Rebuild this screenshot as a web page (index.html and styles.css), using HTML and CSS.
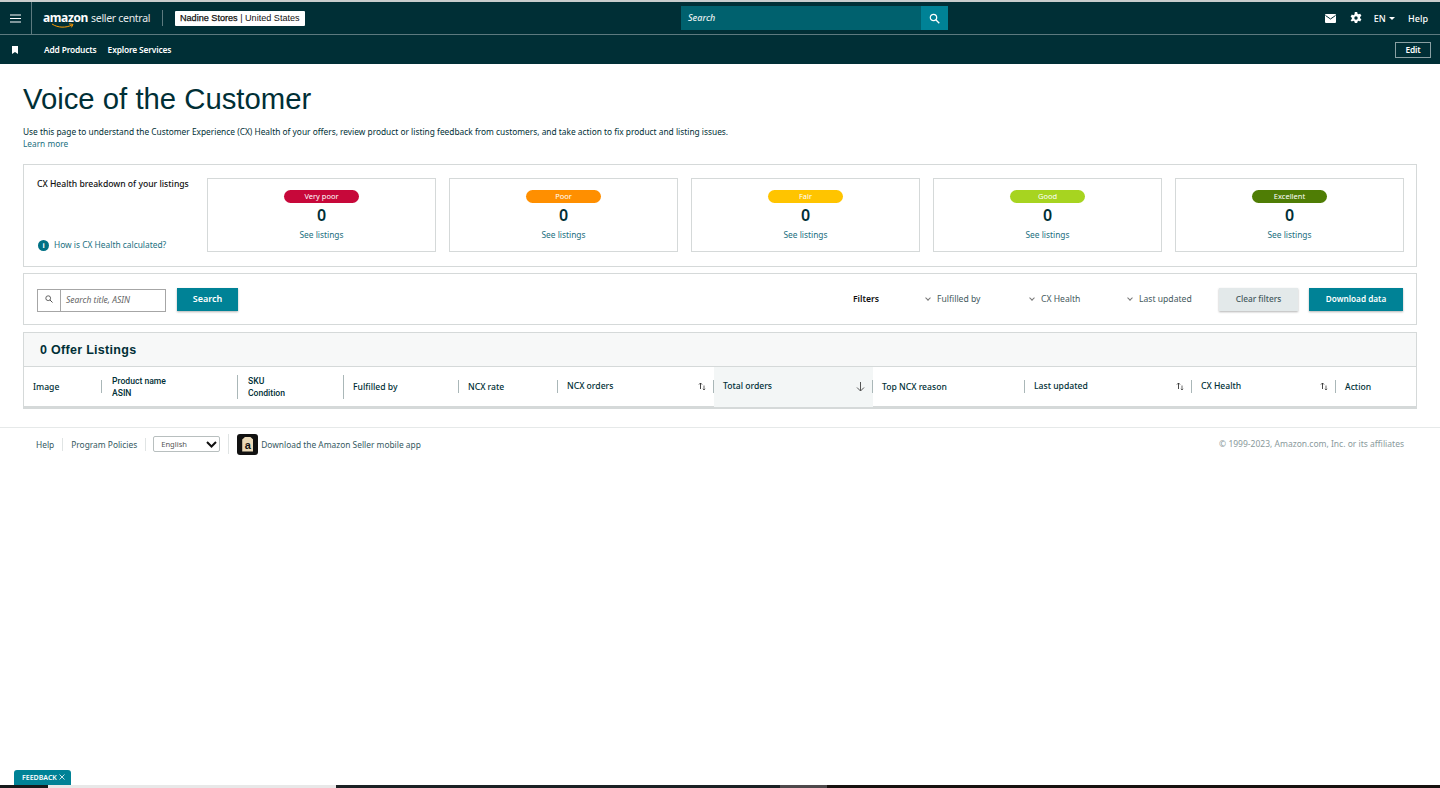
FILE: index.html
```html
<!DOCTYPE html>
<html lang="en">
<head>
    <meta charset="UTF-8">
    <title>Voice of the Customer</title>
    <link rel="stylesheet" href="styles.css">
</head>
<body>
    <header class="topbar">
        <div class="menu-btn">
            <svg width="11" height="9" viewBox="0 0 11 9"><path d="M0 1h11M0 4.500h11M0 8h11" stroke="#fff" stroke-width="1.200"/></svg>
        </div>
        <div class="logo">
            <span class="logo-amazon">amazon</span>
            <span class="logo-seller">seller central</span>
            <svg class="logo-smile" width="24" height="6" viewBox="0 0 24 6"><path d="M1 1c6 4 14 4 20 1M18 .8l4 .6-1.600 3" fill="none" stroke="#f90" stroke-width="1"/></svg>
        </div>
        <div class="store-pick"><b>Nadine Stores</b> | United States</div>
        <div class="top-search">
            <div class="top-search-input">Search</div>
            <div class="top-search-btn">
                <svg width="11" height="11" viewBox="0 0 11 11"><circle cx="4.500" cy="4.500" r="3.200" fill="none" stroke="#fff" stroke-width="1.200"/><path d="M7 7l3.300 3.300" stroke="#fff" stroke-width="1.300"/></svg>
            </div>
        </div>
        <div class="top-right">
            <svg width="11" height="9" viewBox="0 0 11 9"><rect width="11" height="9" rx="1" fill="#fff"/><path d="M0.500 1.500l5 3.500 5-3.500" fill="none" stroke="#002f36" stroke-width="1"/></svg>
            <svg class="gear" width="12" height="12" viewBox="0 0 12 12"><path d="M4.800 0h2.400l.3 1.700 1.100.6 1.600-.6 1.200 2.100-1.300 1.100v1.300l1.300 1.100-1.200 2.100-1.600-.6-1.100.6-.3 1.700H4.800l-.3-1.700-1.100-.6-1.600.6L.6 8.200l1.300-1.100V5.800L.6 4.700 1.800 2.600l1.600.6 1.100-.6z" fill="#fff"/><circle cx="6" cy="6" r="1.700" fill="#002f36"/></svg>
            <span class="lang">EN <i class="caret"></i></span>
            <span>Help</span>
        </div>
    </header>
    <nav class="subbar">
        <svg class="bookmark" width="6" height="8" viewBox="0 0 6 8"><path d="M0 0h6v8L3 6 0 8z" fill="#fff"/></svg>
        <a>Add Products</a>
        <a>Explore Services</a>
        <div class="edit-btn">Edit</div>
    </nav>

    <main class="page">
        <h1>Voice of the Customer</h1>
        <p class="intro">Use this page to understand the Customer Experience (CX) Health of your offers, review product or listing feedback from customers, and take action to fix product and listing issues.</p>
        <a class="link learn">Learn more</a>

        <section class="box health">
            <div class="health-side">
                <div class="health-title">CX Health breakdown of your listings</div>
                <div class="health-how">
                    <span class="info">i</span>
                    <a class="link">How is CX Health calculated?</a>
                </div>
            </div>
            <div class="health-card">
                <span class="pill very-poor">Very poor</span>
                <b>0</b>
                <a class="link">See listings</a>
            </div>
            <div class="health-card">
                <span class="pill poor">Poor</span>
                <b>0</b>
                <a class="link">See listings</a>
            </div>
            <div class="health-card">
                <span class="pill fair">Fair</span>
                <b>0</b>
                <a class="link">See listings</a>
            </div>
            <div class="health-card">
                <span class="pill good">Good</span>
                <b>0</b>
                <a class="link">See listings</a>
            </div>
            <div class="health-card">
                <span class="pill excellent">Excellent</span>
                <b>0</b>
                <a class="link">See listings</a>
            </div>
        </section>

        <section class="box toolbar">
            <div class="search-field">
                <span class="search-icon">
                    <svg width="8" height="8" viewBox="0 0 8 8"><circle cx="3.200" cy="3.200" r="2.400" fill="none" stroke="#555" stroke-width=".9"/><path d="M5 5l2.500 2.500" stroke="#555" stroke-width="1"/></svg>
                </span>
                <span class="search-text">Search title, ASIN</span>
            </div>
            <div class="btn primary search-btn">Search</div>
            <div class="filters-label">Filters</div>
            <div class="filter f1"><i class="chev"></i>Fulfilled by</div>
            <div class="filter f2"><i class="chev"></i>CX Health</div>
            <div class="filter f3"><i class="chev"></i>Last updated</div>
            <div class="btn clear">Clear filters</div>
            <div class="btn primary download">Download data</div>
        </section>

        <section class="box listings">
            <div class="listings-head">0 Offer Listings</div>
            <div class="cols">
                <div class="col c-image"><span>Image</span></div>
                <div class="col c-name"><span class="roboto">Product name<br>ASIN</span></div>
                <div class="col c-sku"><span class="roboto">SKU<br>Condition</span></div>
                <div class="col c-ful"><span>Fulfilled by</span></div>
                <div class="col c-rate"><span>NCX rate</span></div>
                <div class="col c-ncx"><span class="raised">NCX orders</span>
                    <svg class="sort" width="8" height="9" viewBox="0 0 8 9"><path d="M2.500 7V1M1 2.500L2.500 1 4 2.500" fill="none" stroke="#333" stroke-width=".9"/><path d="M6 3.500V8M4.800 6.800L6 8l1.200-1.200" fill="none" stroke="#555" stroke-width=".9"/></svg>
                </div>
                <div class="col c-total"><span class="raised">Total orders</span><svg class="sort-down" width="9" height="10" viewBox="0 0 9 10"><path d="M4.500 0v9M1 5.500l3.500 3.500L8 5.500" fill="none" stroke="#555" stroke-width="1"/></svg></div>
                <div class="col c-top"><span>Top NCX reason</span></div>
                <div class="col c-upd"><span class="raised">Last updated</span>
                    <svg class="sort" width="8" height="9" viewBox="0 0 8 9"><path d="M2.500 7V1M1 2.500L2.500 1 4 2.500" fill="none" stroke="#333" stroke-width=".9"/><path d="M6 3.500V8M4.800 6.800L6 8l1.200-1.200" fill="none" stroke="#555" stroke-width=".9"/></svg>
                </div>
                <div class="col c-cx"><span class="raised">CX Health</span>
                    <svg class="sort" width="8" height="9" viewBox="0 0 8 9"><path d="M2.500 7V1M1 2.500L2.500 1 4 2.500" fill="none" stroke="#333" stroke-width=".9"/><path d="M6 3.500V8M4.800 6.800L6 8l1.200-1.200" fill="none" stroke="#555" stroke-width=".9"/></svg>
                </div>
                <div class="col c-act"><span>Action</span></div>
            </div>
        </section>
    </main>

    <footer class="foot">
        <a class="foot-link first">Help</a>
        <a class="foot-link policies">Program Policies</a>
        <div class="foot-select">English
            <svg width="11" height="7" viewBox="0 0 11 7"><path d="M1 1l4.500 4.500L10 1" fill="none" stroke="#111" stroke-width="2"/></svg>
        </div>
        <div class="foot-app">
            <span class="app-icon">a</span>
            <a class="foot-link plain">Download the Amazon Seller mobile app</a>
        </div>
        <div class="copyright">© 1999-2023, Amazon.com, Inc. or its affiliates</div>
    </footer>

    <div class="feedback">FEEDBACK
        <svg width="6" height="6" viewBox="0 0 6 6"><path d="M.5.500l5 5M5.500.500l-5 5" stroke="#fff" stroke-width=".8"/></svg>
    </div>
    <div class="taskbar">
        <div class="tb-a"></div>
        <div class="tb-b"></div>
        <div class="tb-c"></div>
        <div class="tb-d"></div>
        <div class="tb-e"></div>
    </div>
</body>
</html>
```

FILE: styles.css
```css
* {
    box-sizing: border-box;
}
html, body {
    height: 100%;
}
body {
    margin: 0;
    font-family: "Noto Sans", Arial, sans-serif;
    font-size: 8.6px;
    color: #002f36;
    background: #fff;
    overflow: hidden;
    display: flex;
    flex-direction: column;
    position: relative;
}
a {
    color: inherit;
    text-decoration: none;
}
.link {
    color: #1b6f80;
}

/* top bars */
.topbar {
    height: 35px;
    flex: none;
    display: flex;
    align-items: center;
    background: #002f36;
    border-top: 2px solid #c9cdcd;
    border-bottom: 1px solid #5d7a7f;
    color: #fff;
    position: relative;
}
.menu-btn {
    width: 32px;
    height: 100%;
    border-right: 1px solid #5d7a7f;
    display: flex;
    align-items: center;
    justify-content: center;
}
.logo {
    margin-left: 11px;
    position: relative;
    font-size: 12px;
    line-height: 16px;
    width: 120px;
    white-space: nowrap;
    border-right: 1px solid #5d7a7f;
}
.logo-amazon {
    font-weight: 700;
    letter-spacing: -.4px;
}
.logo-seller {
    font-weight: 400;
    font-size: 10.5px;
    letter-spacing: -.3px;
    color: #e6eaea;
}
.logo-smile {
    position: absolute;
    left: 8px;
    top: 13px;
}
.store-pick {
    margin-left: 12px;
    background: #fff;
    color: #111;
    height: 15px;
    line-height: 15px;
    padding: 0 5px;
    font-family: "Liberation Sans", Arial, sans-serif;
    font-size: 9.1px;
    border-radius: 1px;
    white-space: nowrap;
}
.store-pick b {
    font-weight: 400;
    -webkit-text-stroke: .25px #111;
}
.top-search {
    position: absolute;
    left: 681px;
    top: 4px;
    width: 267px;
    height: 24px;
    display: flex;
}
.top-search-input {
    flex: 1;
    background: #00616e;
    font-style: italic;
    font-weight: 500;
    font-size: 9px;
    line-height: 24px;
    padding-left: 7px;
    color: #e6f0f0;
}
.top-search-btn {
    width: 27px;
    background: #008296;
    display: flex;
    align-items: center;
    justify-content: center;
}
.top-right {
    margin-left: auto;
    display: flex;
    align-items: center;
    padding-right: 12px;
    font-size: 9px;
    font-weight: 500;
    gap: 13px;
}
.top-right .gear {
    margin-left: 1px;
    margin-right: -1px;
}
.caret {
    display: inline-block;
    width: 0;
    height: 0;
    border: 3px solid transparent;
    border-top: 3px solid #fff;
    border-bottom: 0;
    vertical-align: 2px;
    margin-left: 1px;
}
.subbar {
    height: 29px;
    flex: none;
    display: flex;
    align-items: center;
    background: #002f36;
    color: #fff;
    font-size: 8.4px;
    font-weight: 600;
    letter-spacing: -.15px;
}
.bookmark {
    margin-left: 12px;
    margin-right: 26px;
}
.subbar a {
    margin-right: 11px;
}
.edit-btn {
    margin-left: auto;
    margin-right: 9px;
    width: 36px;
    height: 16px;
    border: 1px solid #8aa0a3;
    text-align: center;
    line-height: 14px;
}

/* page */
.page {
    padding: 0 23px;
}
h1 {
    margin: 17px 0 0;
    font-family: "Liberation Sans", Arial, sans-serif;
    font-weight: 400;
    font-size: 29.3px;
    line-height: 36px;
    color: #002f36;
}
.intro {
    margin: 8px 0 0;
    font-size: 8.35px;
    line-height: 13px;
    color: #002f36;
}
.learn {
    display: block;
    font-size: 8.3px;
    line-height: 12px;
}
.box {
    border: 1px solid #d5d9d9;
    width: 1394px;
}
.health {
    margin-top: 14px;
    height: 103px;
    padding: 13px 13px 14px;
    display: flex;
    gap: 13px;
}
.health-side {
    width: 157px;
    flex: none;
    display: flex;
    flex-direction: column;
    justify-content: space-between;
}
.health-title {
    font-weight: 500;
    white-space: nowrap;
    color: #111;
    line-height: 12px;
}
.health-how {
    display: flex;
    align-items: center;
    gap: 5px;
    margin-bottom: 1px;
    margin-left: 1px;
    white-space: nowrap;
    line-height: 12px;
    font-size: 8.4px;
}
.info {
    width: 11px;
    height: 11px;
    border-radius: 50%;
    background: #007185;
    color: #fff;
    font-weight: 700;
    font-size: 8px;
    line-height: 11px;
    text-align: center;
    font-family: "Liberation Sans", Arial, sans-serif;
}
.health-card {
    flex: none;
    width: 229px;
    border: 1px solid #d5d9d9;
    display: flex;
    flex-direction: column;
    align-items: center;
    padding-top: 11px;
}
.health-card b {
    font-size: 16px;
    line-height: 22px;
    font-weight: 600;
    margin-top: 1px;
    color: #002f36;
}
.health-card .link {
    margin-top: 3px;
    line-height: 12px;
    font-size: 8.4px;
}
.pill {
    width: 75px;
    height: 13px;
    border-radius: 7px;
    color: #fff;
    text-align: center;
    font-size: 7.5px;
    line-height: 13px;
}
.very-poor { background: #c7083a; }
.poor { background: #ff8f00; }
.fair { background: #ffc400; }
.good { background: #a7d420; }
.excellent { background: #4f7d05; }

.toolbar {
    margin-top: 6px;
    height: 52px;
    padding: 14px 13px 0;
    display: flex;
    align-items: flex-start;
    position: relative;
}
.search-field {
    width: 129px;
    height: 23px;
    border: 1px solid #a6a6a6;
    display: flex;
    margin-top: 1px;
}
.search-icon {
    width: 23px;
    border-right: 1px solid #a6a6a6;
    display: flex;
    align-items: center;
    justify-content: center;
    padding-bottom: 3px;
}
.search-text {
    font-style: italic;
    font-size: 8.5px;
    color: #666;
    line-height: 19px;
    padding-left: 5px;
    white-space: nowrap;
}
.btn {
    height: 23px;
    line-height: 22px;
    text-align: center;
    font-weight: 500;
    box-shadow: 0 1px 2px rgba(0, 0, 0, .3);
    white-space: nowrap;
}
.primary {
    background: #008296;
    color: #fff;
    font-weight: 600;
}
.search-btn {
    width: 61px;
    margin-left: 11px;
    font-size: 9px;
}
.filters-label {
    margin-left: 615px;
    font-weight: 600;
    line-height: 22px;
    color: #111;
    width: 45px;
}
.filter {
    line-height: 22px;
    color: #44595d;
    white-space: nowrap;
}
.filter .chev {
    display: inline-block;
    width: 4px;
    height: 4px;
    border-right: 1px solid #777;
    border-bottom: 1px solid #777;
    transform: rotate(45deg);
    margin: 0 7px 2px 2px;
}
.f1 { width: 104px; margin-left: 26px; }
.f2 { width: 98px; }
.f3 { width: 93px; }
.clear {
    background: #e3e9ea;
    color: #44595d;
    width: 79px;
    font-size: 8.3px;
}
.download {
    width: 94px;
    margin-left: 11px;
    font-size: 8.2px;
}

.listings {
    margin-top: 7px;
    height: 77px;
    border-bottom: 3px solid #d5d9d9;
}
.listings-head {
    height: 34px;
    background: #f7f8f8;
    border-bottom: 1px solid #d5d9d9;
    padding-left: 16px;
    font-family: "Liberation Sans", Arial, sans-serif;
    font-size: 12.5px;
    font-weight: 700;
    line-height: 34px;
    letter-spacing: .3px;
    color: #002f36;
}
.cols {
    display: flex;
    height: 40px;
    font-weight: 500;
    color: #002f36;
}
.col {
    display: flex;
    align-items: center;
    padding-left: 9px;
    position: relative;
    line-height: 12px;
    white-space: nowrap;
}
.col::after {
    content: "";
    position: absolute;
    right: 0;
    top: 13px;
    height: 13px;
    width: 1px;
    background: #aab7b8;
}
.c-sku::after, .c-name::after {
    top: 8px;
    height: 24px;
}
.c-image { width: 78px; }
.c-name { width: 136px; padding-left: 10px; }
.c-sku { width: 106px; padding-left: 10px; }
.c-ful { width: 115px; }
.c-rate { width: 99px; }
.c-ncx { width: 156px; }
.c-total { width: 159px; background: #f3f6f6; }
.c-top { width: 152px; }
.c-upd { width: 167px; }
.c-cx { width: 144px; }
.c-act { flex: 1; }
.c-act::after { display: none; }
.roboto {
    font-family: Roboto, Arial, sans-serif;
    font-weight: 500;
}
.raised {
    margin-top: -2px;
}
.sort {
    position: absolute;
    right: 8px;
    top: 15px;
}
.sort-down {
    position: absolute;
    right: 8px;
    top: 15px;
}

/* footer */
.foot {
    margin-top: 18px;
    height: 33px;
    border-top: 1px solid #e6e9e9;
    display: flex;
    align-items: center;
    padding: 0 36px;
    font-size: 8.4px;
    color: #36595f;
    white-space: nowrap;
}
.foot-link {
    color: #36595f;
    padding-right: 8px;
    border-right: 1px solid #e0e4e4;
    line-height: 13px;
    margin-right: 8px;
}
.foot-link.policies {
    margin-right: 7px;
}
.foot-link.plain {
    border: 0;
}
.foot-select {
    width: 67px;
    height: 16px;
    border: 1px solid #b8bfbf;
    border-radius: 2px;
    line-height: 14px;
    padding: 0 2px 0 7px;
    font-size: 7.6px;
    color: #555;
    display: flex;
    justify-content: space-between;
    align-items: center;
}
.foot-app {
    display: flex;
    align-items: center;
    gap: 3px;
    margin-left: 8px;
    padding-left: 8px;
    border-left: 1px solid #e0e4e4;
    height: 20px;
}
.app-icon {
    width: 21px;
    height: 21px;
    border-radius: 3px;
    background: #111;
    color: #111;
    position: relative;
    z-index: 0;
    text-align: center;
    font-family: "Liberation Sans", Arial, sans-serif;
    font-weight: 700;
    font-size: 11px;
    line-height: 22px;
}
.app-icon::before {
    content: "";
    position: absolute;
    z-index: -1;
    left: 5px;
    top: 3px;
    width: 11px;
    height: 15px;
    background: #ead9b8;
    clip-path: polygon(30% 0, 70% 0, 100% 20%, 100% 100%, 0 100%, 0 20%);
}
.copyright {
    margin-left: auto;
    margin-bottom: 2px;
    color: #8a9a9c;
    font-size: 8.5px;
}

.feedback {
    position: absolute;
    left: 14px;
    top: 770px;
    width: 57px;
    height: 15px;
    background: #008296;
    border-radius: 3px 3px 0 0;
    color: #fff;
    font-size: 7px;
    font-weight: 600;
    line-height: 15px;
    padding-left: 8px;
    white-space: nowrap;
}
.taskbar {
    position: absolute;
    left: 0;
    right: 0;
    bottom: 0;
    height: 3px;
    display: flex;
    background: #16110f;
}
.tb-a { width: 48px; background: #151a1c; }
.tb-b { width: 288px; background: #e8e8e8; }
.tb-c { width: 444px; background: #1b2124; }
.tb-d { width: 47px; background: #4e494b; }
.tb-e { flex: 1; background: #17110f; }
```
